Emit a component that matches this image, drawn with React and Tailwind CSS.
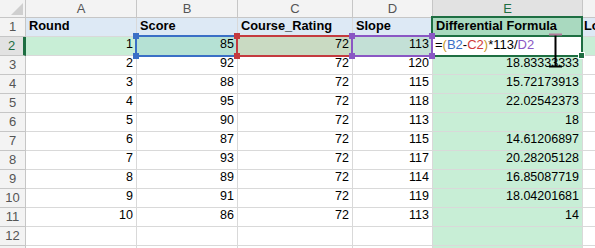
const rows = [
  [1, 85, 72, 113, null],
  [2, 92, 72, 120, "18.83333333"],
  [3, 88, 72, 115, "15.72173913"],
  [4, 95, 72, 118, "22.02542373"],
  [5, 90, 72, 113, "18"],
  [6, 87, 72, 115, "14.61206897"],
  [7, 93, 72, 117, "20.28205128"],
  [8, 89, 72, 114, "16.85087719"],
  [9, 91, 72, 119, "18.04201681"],
  [10, 86, 72, 113, "14"],
];

// F's letter sits off-screen, its column is wider than what we see
const letters = ["A", "B", "C", "D", "E", ""];
const heads = ["Round", "Score", "Course_Rating", "Slope", "Differential Formula", "Lo"];

function Cell({ children, right, className = "" }) {
  return (
    <div
      className={`flex items-end whitespace-nowrap border-r border-b border-[#d9d9d9] px-[3px] pb-[1px] text-[12.5px] text-black ${
        right ? "justify-end" : "justify-start"
      } ${className}`}
    >
      {children}
    </div>
  );
}

function Handle({ x, y, color }) {
  return (
    <div
      className="absolute h-[6px] w-[6px]"
      style={{ left: x - 3, top: y - 3, background: color }}
    />
  );
}

function RefBox({ left, width, color }) {
  return (
    <>
      <div
        className="absolute border-2"
        style={{ left, top: 35, width, height: 22, borderColor: color }}
      />
      <Handle x={left + 1} y={36} color={color} />
      <Handle x={left + width - 1} y={36} color={color} />
      <Handle x={left + 1} y={56} color={color} />
      <Handle x={left + width - 1} y={56} color={color} />
    </>
  );
}

function RowHead({ children }) {
  return (
    <div className="flex items-center justify-center border-r border-b border-[#c6c6c6] bg-[#f3f3f3] text-[13px] text-[#555]">
      {children}
    </div>
  );
}

export default function App() {
  return (
    <div
      className="relative h-[248px] w-[595px] overflow-hidden bg-white"
      style={{ fontFamily: '"Liberation Sans", Arial, sans-serif' }}
    >
      <div className="grid grid-cols-[26px_111px_101px_115px_80px_150px_1fr] grid-rows-[18px_repeat(13,19px)]">
        {/* corner */}
        <div className="relative border-r border-b border-[#c6c6c6] bg-[#f3f3f3]">
          <svg className="absolute right-[2px] bottom-[2px]" width="12" height="12" viewBox="0 0 12 12">
            <polygon points="12,0 12,12 0,12" fill="#cfcfcf" />
          </svg>
        </div>
        {letters.map((l, i) => (
          <div
            key={i}
            className={`flex items-center justify-center border-r border-b text-[13px] ${
              l === "E"
                ? "border-b-[#1e6e42] bg-[#e2e2e2] text-[#1e6e42]"
                : "border-[#c6c6c6] bg-[#f3f3f3] text-[#555]"
            } border-r-[#c6c6c6]`}
          >
            {l}
          </div>
        ))}

        {/* row 1 */}
        <RowHead>1</RowHead>
        {heads.map((h, i) => (
          <Cell key={h} className={`text-[12.8px] font-bold ${i === 4 ? "bg-[#a9d9bf]" : "bg-[#dde9f5]"} ${i === 5 ? "pl-[1px]" : ""}`}>
            {h}
          </Cell>
        ))}

        {/* row 2 */}
        <div className="flex items-center justify-center border-r-[3px] border-b border-r-[#1e6e42] border-b-[#c6c6c6] bg-[#e2e2e2] text-[13px] text-[#1e6e42]">
          2
        </div>
        <Cell right className="bg-[#c8eed6]">1</Cell>
        <Cell right className="bg-[#b5e1d4]">85</Cell>
        <Cell right className="bg-[#c9dac2]">72</Cell>
        <Cell right className="bg-[#c3e0d6]">113</Cell>
        <Cell className="bg-white pl-[2px] text-[13px]">
          <span>
            =<span className="text-[#c8951c]">(</span>
            <span className="text-[#3a6fc6]">B2</span>-
            <span className="text-[#cf3a3a]">C2</span>
            <span className="text-[#c8951c]">)</span>*113/
            <span className="text-[#8a57c4]">D2</span>
          </span>
        </Cell>
        <Cell className="bg-[#c8eed6]" />

        {rows.slice(1).map((r, i) => (
          <div key={i} className="contents">
            <RowHead>{i + 3}</RowHead>
            <Cell right>{r[0]}</Cell>
            <Cell right>{r[1]}</Cell>
            <Cell right>{r[2]}</Cell>
            <Cell right>{r[3]}</Cell>
            <Cell right className="bg-[#c8eed6]">{r[4]}</Cell>
            <Cell />
          </div>
        ))}

        {/* row 12 and the edge of 13 */}
        {["12", ""].map((n, k) => (
          <div key={k} className="contents">
            <RowHead>{n}</RowHead>
            <Cell />
            <Cell />
            <Cell />
            <Cell />
            <Cell className="bg-[#c8eed6]" />
            <Cell />
          </div>
        ))}
      </div>

      {/* selection outline around E1:E2 */}
      <div className="absolute left-[431px] top-[16px] h-[41px] w-[152px] border-2 border-[#1e6e42]" />
      <div className="absolute left-[431px] top-[35px] h-[2px] w-[152px] bg-[#1e6e42]" />
      <div className="absolute left-[578px] top-[52px] h-[7px] w-[7px] border border-white bg-[#1e6e42]" />

      {/* reference boxes */}
      <RefBox left={135} width={103} color="#3a6fc6" />
      <RefBox left={236} width={117} color="#c43a3f" />
      <RefBox left={351} width={82} color="#8a57c4" />

      {/* text cursor */}
      <svg className="absolute left-[548px] top-[33px]" width="15" height="35" viewBox="0 0 15 35">
        <rect x="6.5" y="1" width="2" height="33" fill="#000" />
        <rect x="1" y="0.5" width="13" height="2" fill="#b27a9c" />
        <rect x="1" y="32.5" width="13" height="2" fill="#000" />
      </svg>
    </div>
  );
}
